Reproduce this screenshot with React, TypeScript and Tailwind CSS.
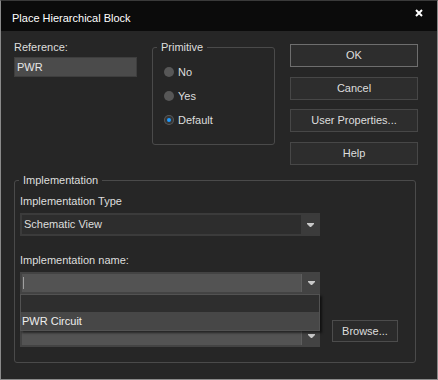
import React from "react";

function Arrow() {
  return (
    <svg width="7" height="4" viewBox="0 0 7 4" className="block">
      <polygon points="0,0 7,0 7,1 5,3 4,4 3,4 2,3 0,1" fill="#c8c8c8" />
    </svg>
  );
}

function Radio({ label, checked }: { label: string; checked?: boolean }) {
  return (
    <div className="h-[24px] flex items-center gap-[4px]">
      {checked ? (
        <div className="w-[10px] h-[10px] rounded-full bg-[#5a5a5a] flex items-center justify-center">
          <div className="w-[8px] h-[8px] rounded-full bg-[#353535] flex items-center justify-center">
            <div className="w-[4px] h-[4px] rounded-full bg-[#1e9bff]" />
          </div>
        </div>
      ) : (
        <div className="w-[10px] h-[10px] rounded-full bg-[#575757]" />
      )}
      <span>{label}</span>
    </div>
  );
}

function Button({ label, primary }: { label: string; primary?: boolean }) {
  return (
    <div
      className={
        "w-[128px] h-[23px] flex items-center justify-center bg-[#2d2d2d] border " +
        (primary ? "border-[#6e6e6e]" : "border-[#474747]")
      }
    >
      {label}
    </div>
  );
}

function Combo({ children }: { children?: React.ReactNode }) {
  return (
    <div className="w-[300px] h-[22px] bg-[#434343] flex p-[2px] pr-0">
      <div className="flex-1 bg-[#535353] border-r border-[#5e5e5e] flex items-center pl-[1px]">
        {children}
      </div>
      <div className="w-[18px] flex items-center justify-center">
        <Arrow />
      </div>
    </div>
  );
}

export default function App() {
  return (
    <div className="w-[438px] h-[380px] bg-[#262626] border-x border-b border-t border-[#8a8a8a] border-t-[#3a3a3a] flex flex-col text-[11px] leading-[13px] text-[#dedede] font-['Liberation_Sans',Arial,sans-serif] select-none">
      {/* title bar */}
      <div className="h-[30px] bg-[#0b0b0b] flex items-start justify-between pl-[11px] pr-[14px] pt-[11px]">
        <span className="text-white">Place Hierarchical Block</span>
        <svg width="8" height="8" viewBox="0 0 8 8" className="mt-[-3px]">
          <path d="M1 1 L7 7 M7 1 L1 7" stroke="#ffffff" strokeWidth="2" />
        </svg>
      </div>

      <div className="flex-1 pt-[10px] pl-[13px] flex flex-col">
        {/* top row */}
        <div className="flex items-start">
          <div className="w-[123px] flex flex-col">
            <span>Reference:</span>
            <div className="mt-[3px] h-[20px] bg-[#4b4b4b] border border-[#3e3e3e] flex items-center pl-[2px] text-[#e6e6e6]">
              PWR
            </div>
          </div>

          <fieldset className="ml-[15px] w-[123px] h-[104px] border border-[#4a4a4a] rounded-[3px] px-0">
            <legend className="ml-[4px] px-[4px] leading-[13px]">Primitive</legend>
            <div className="pt-[6px] pl-[11px]">
              <Radio label="No" />
              <Radio label="Yes" />
              <Radio label="Default" checked />
            </div>
          </fieldset>

          <div className="ml-[15px] mt-[3px] flex flex-col">
            <Button label="OK" primary />
            <div className="mt-[10px]">
              <Button label="Cancel" />
            </div>
            <div className="mt-[9px]">
              <Button label="User Properties..." />
            </div>
            <div className="mt-[10px]">
              <Button label="Help" />
            </div>
          </div>
        </div>

        {/* implementation */}
        <fieldset className="mt-[9px] w-[402px] h-[189px] border border-[#4a4a4a] rounded-[3px] px-0">
          <legend className="ml-[4px] px-[4px] leading-[13px]">Implementation</legend>
          <div className="relative pt-[8px] pl-[5px] flex flex-col">
            <span>Implementation Type</span>
            <div className="mt-[5px] w-[300px] h-[23px] bg-[#3b3b3b] flex p-[2px] pr-0">
              <div className="flex-1 bg-[#2d2d2d] flex items-center pl-[2px]">Schematic View</div>
              <div className="w-[19px] flex items-center justify-center">
                <Arrow />
              </div>
            </div>

            <span className="mt-[18px]">Implementation name:</span>
            <div className="mt-[5px]">
              <Combo>
                <div className="w-[1px] h-[12px] bg-[#a0a0a0]" />
              </Combo>
            </div>

            <div className="mt-[26px] flex items-end">
              <Combo />
              <div className="ml-[12px] mb-[5px] w-[66px] h-[22px] bg-[#2b2b2b] border border-[#4c4c4c] flex items-center justify-center">
                Browse...
              </div>
            </div>

            {/* open dropdown list */}
            <div className="absolute left-[5px] top-[107px] w-[300px] h-[37px] bg-[#3f3f3f] border border-[#525252] shadow-[2px_2px_2px_rgba(0,0,0,0.55)] flex flex-col">
              <div className="h-[17px] bg-[#2e2e2e]" />
              <div className="h-[18px] bg-[#474747] flex items-center pl-[1px] text-[#eeeeee]">PWR Circuit</div>
            </div>
          </div>
        </fieldset>
      </div>
    </div>
  );
}
